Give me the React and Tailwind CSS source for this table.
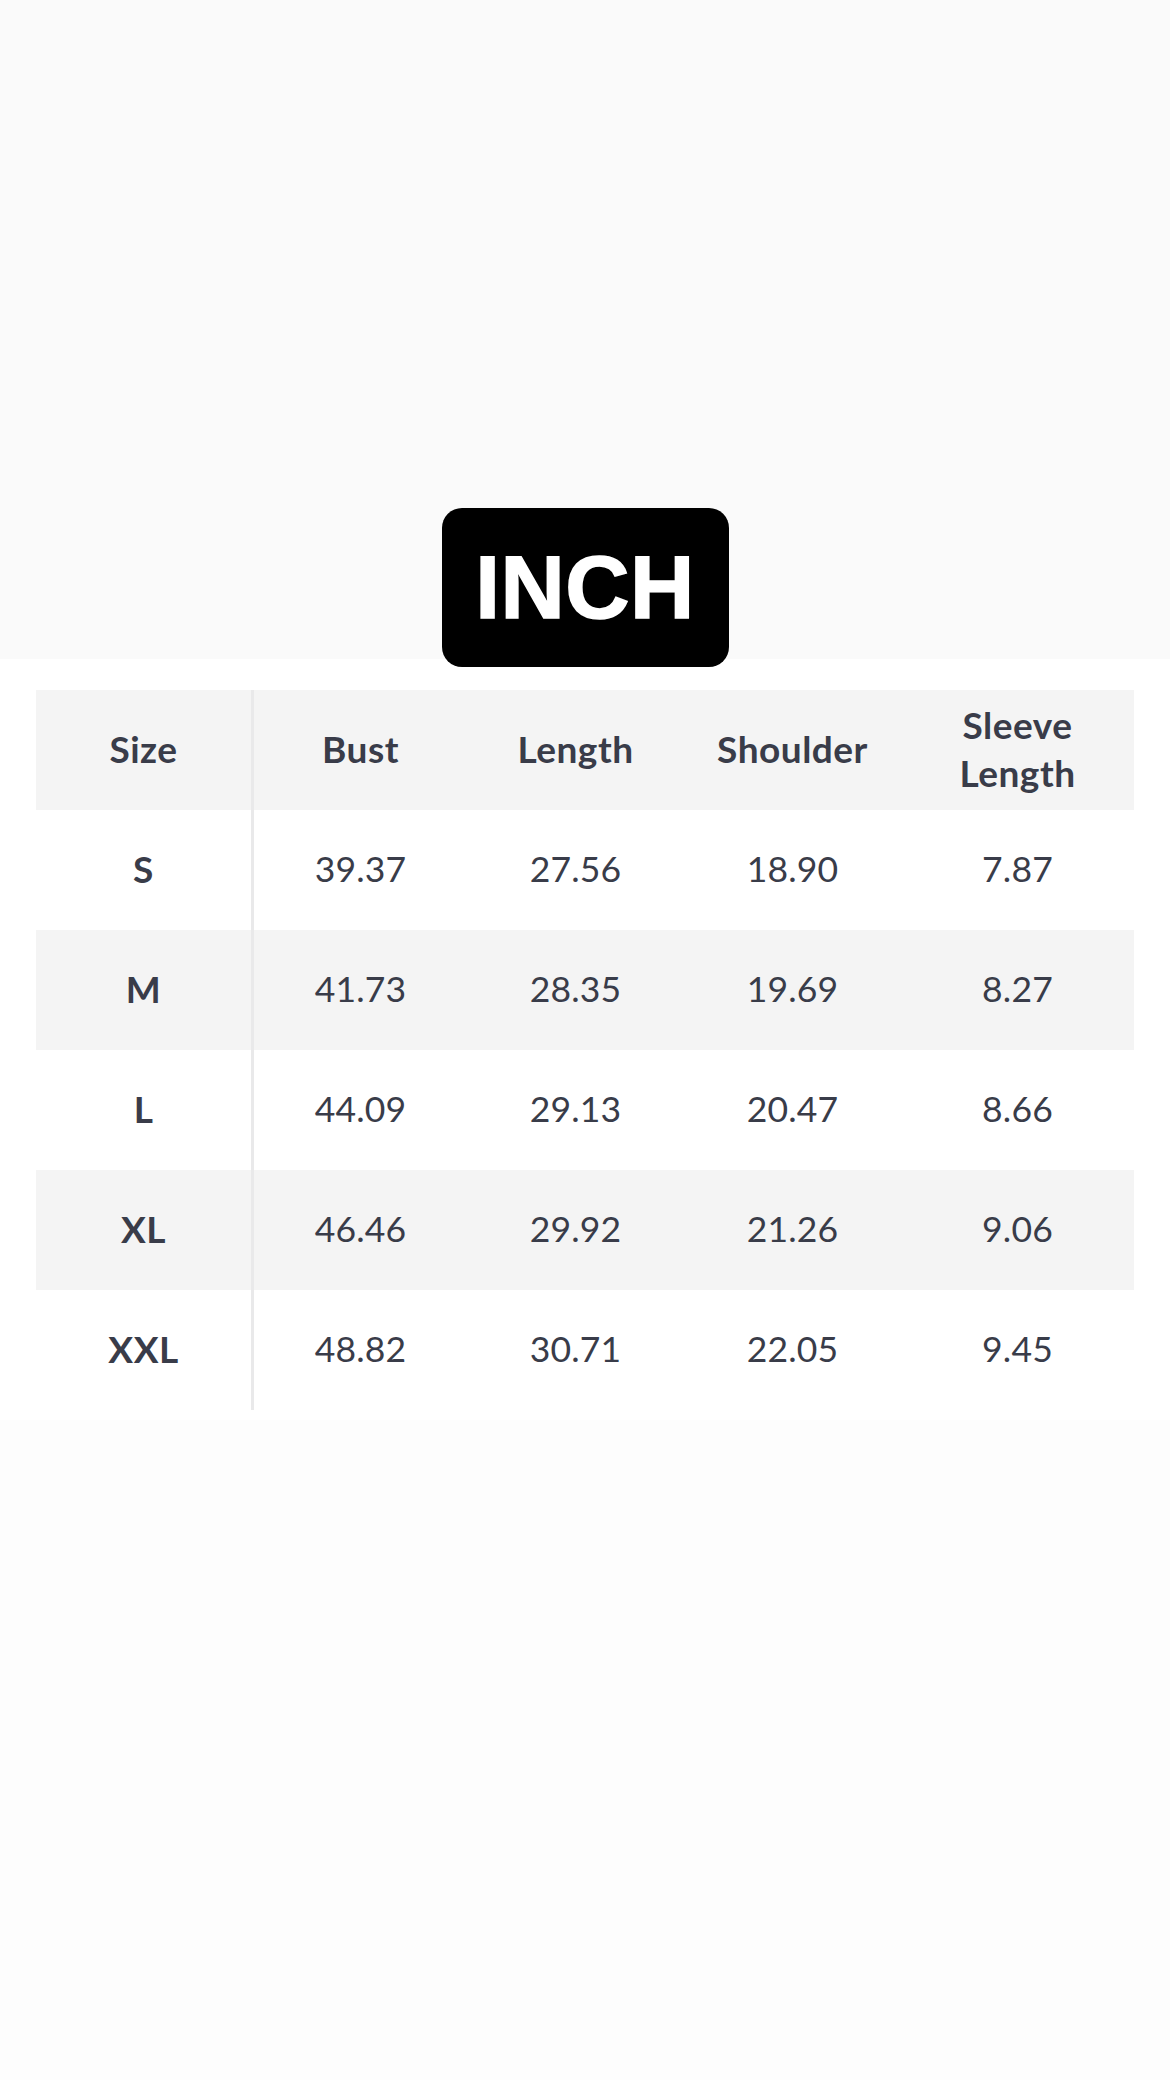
const headers = ['Size', 'Bust', 'Length', 'Shoulder', 'Sleeve Length'];

const rows = [
  ['S', '39.37', '27.56', '18.90', '7.87'],
  ['M', '41.73', '28.35', '19.69', '8.27'],
  ['L', '44.09', '29.13', '20.47', '8.66'],
  ['XL', '46.46', '29.92', '21.26', '9.06'],
  ['XXL', '48.82', '30.71', '22.05', '9.45'],
];

function Row({ cells, head, shaded }) {
  const bg = shaded ? 'bg-[#f4f4f4]' : 'bg-white';
  const txt = head
    ? 'font-bold text-[37px] tracking-[0.5px] leading-[48px]'
    : 'font-normal text-[35.5px] tracking-[0.2px]';
  return (
    <div className="grid grid-cols-[215px_3px_213px_217px_217px_233px] h-[120px]">
      <div className={`${bg} flex items-center justify-center text-center pb-[3px] font-bold text-[37px] tracking-[0.5px]`}>{cells[0]}</div>
      <div className="bg-[#e9e9ea]" />
      {cells.slice(1).map((c, i) => (
        <div key={i} className={`${bg} flex items-center justify-center text-center px-2 pb-[3px] ${txt}`}>
          {c === 'Sleeve Length' ? (
            <span>Sleeve<br />Length</span>
          ) : (
            c
          )}
        </div>
      ))}
    </div>
  );
}

export default function App() {
  return (
    <div className="w-[1170px] min-h-[2080px] bg-[#fdfdfd] font-['Lato','Liberation_Sans',sans-serif] text-[#393c49]">
      <div className="bg-[#fafafa] h-[659px] flex flex-col items-center">
        <div className="relative z-10 mt-[508px] w-[287px] h-[159px] shrink-0 rounded-[20px] bg-black flex items-center justify-center">
          <span className="font-['Liberation_Sans',Arial,sans-serif] font-bold text-white text-[89px] leading-none tracking-[0.5px] [-webkit-text-stroke:1.5px_white]">INCH</span>
        </div>
      </div>

      <div className="bg-white pt-[31px] pb-[10px] px-[36px]">
        <div>
          <Row cells={headers} head shaded />
          {rows.map((r, i) => (
            <Row key={r[0]} cells={r} shaded={i % 2 === 1} />
          ))}
        </div>
      </div>
    </div>
  );
}
